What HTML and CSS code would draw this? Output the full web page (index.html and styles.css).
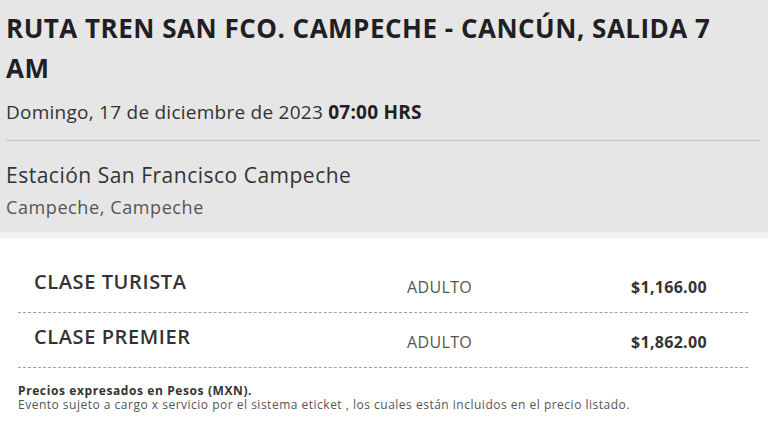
FILE: index.html
```html
<!DOCTYPE html>
<html lang="es">
<head>
<meta charset="utf-8">
<title>Ruta Tren</title>
<link rel="stylesheet" href="styles.css">
</head>
<body>
<header class="header">
  <h1 class="title">RUTA TREN SAN FCO. CAMPECHE - CANCÚN, SALIDA 7 AM</h1>
  <p class="date">Domingo, 17 de diciembre de 2023 <strong>07:00 HRS</strong></p>
  <div class="divider"></div>
  <p class="venue">Estación San Francisco Campeche</p>
  <p class="city">Campeche, Campeche</p>
</header>
<section class="prices">
  <div class="row">
    <div class="name">CLASE TURISTA</div>
    <div class="type">ADULTO</div>
    <div class="price">$1,166.00</div>
  </div>
  <div class="row">
    <div class="name">CLASE PREMIER</div>
    <div class="type">ADULTO</div>
    <div class="price">$1,862.00</div>
  </div>
  <p class="note-bold">Precios expresados en Pesos (MXN).</p>
  <p class="note">Evento sujeto a cargo x servicio por el sistema eticket , los cuales están incluidos en el precio listado.</p>
</section>
</body>
</html>
```

FILE: styles.css
```css
html, body {
  margin: 0;
  padding: 0;
  background: #ffffff;
  font-family: "Open Sans", "Noto Sans", sans-serif;
}

.header {
  background: #e6e6e6;
  height: 224px;
  padding: 8px 8px 0 6px;
  border-bottom: 6px solid #f2f2f2;
}

.title {
  margin: 0;
  padding-right: 30px;
  font-size: 26px;
  line-height: 40px;
  font-weight: 700;
  letter-spacing: 0.5px;
  color: #1f1f24;
}

.date {
  margin: 11px 0 0;
  font-size: 19px;
  line-height: 26px;
  letter-spacing: 0.25px;
  color: #333333;
}

.date strong {
  color: #1f1f24;
}

.divider {
  margin-top: 15px;
  border-top: 1px solid #c6c6c6;
}

.venue {
  margin: 20px 0 0;
  font-size: 21px;
  line-height: 28px;
  letter-spacing: 0.5px;
  color: #333333;
}

.city {
  margin: 6px 0 0;
  font-size: 18px;
  line-height: 24px;
  letter-spacing: 0.6px;
  color: #555555;
}

.prices {
  padding: 20px 20px 0 18px;
}

.row {
  display: flex;
  align-items: flex-start;
  height: 54px;
  border-bottom: 1px dashed #9aa3ab;
}

.name {
  width: 373px;
  padding: 10px 0 0 16px;
  font-size: 20px;
  line-height: 28px;
  font-weight: 600;
  letter-spacing: 0.6px;
  color: #333333;
}

.type {
  width: 224px;
  padding-top: 18px;
  font-size: 16px;
  line-height: 22px;
  letter-spacing: 0.35px;
  color: #555555;
}

.price {
  padding-top: 18px;
  font-size: 16px;
  line-height: 22px;
  font-weight: 700;
  letter-spacing: 0.3px;
  color: #333333;
}

.note-bold {
  margin: 16px 0 0;
  font-size: 12px;
  line-height: 14px;
  font-weight: 700;
  letter-spacing: 0.6px;
  color: #333333;
}

.note {
  margin: 0;
  font-size: 12px;
  line-height: 14px;
  letter-spacing: 0.5px;
  color: #555555;
}
```
